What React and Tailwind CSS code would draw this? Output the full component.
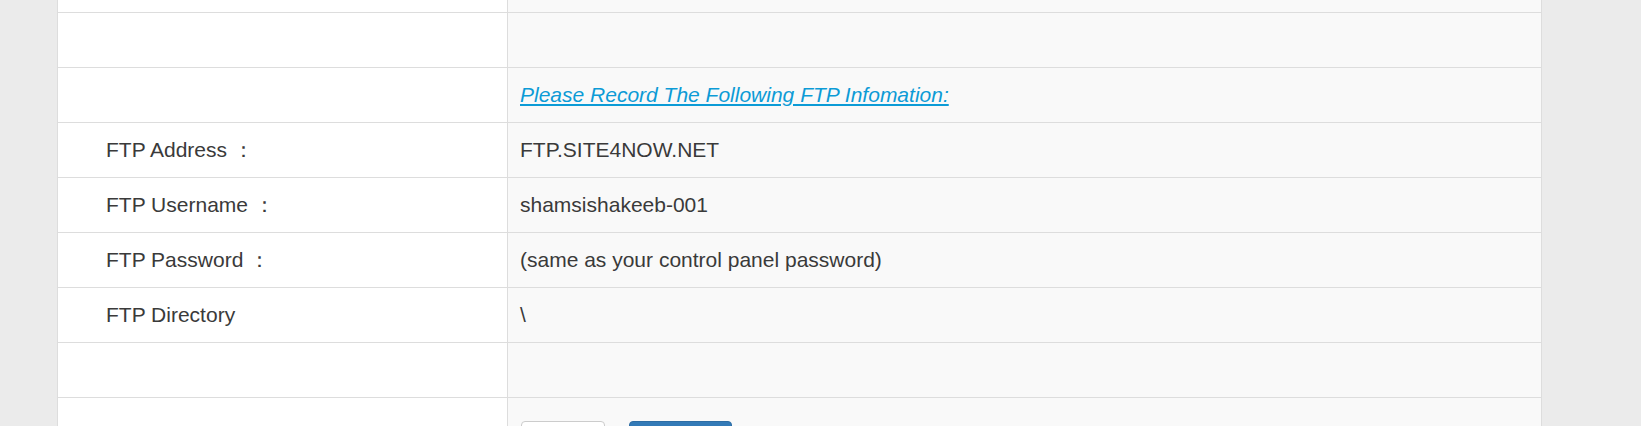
import React from "react";

const rows = [
  { label: "FTP Address ：", value: "FTP.SITE4NOW.NET" },
  { label: "FTP Username ：", value: "shamsishakeeb-001" },
  { label: "FTP Password ：", value: "(same as your control panel password)" },
  { label: "FTP Directory", value: "\\" },
];

function Row({ label, children, h = "h-[55px]" }) {
  return (
    <div className={`flex ${h} border-b border-[#dddddd]`}>
      <div className="w-[450px] shrink-0 border-r border-[#dddddd] bg-white flex items-center pl-[48px]">
        {label}
      </div>
      <div className="flex-1 bg-[#f9f9f9] flex items-center pl-[12px]">{children}</div>
    </div>
  );
}

export default function App() {
  return (
    <div
      className="min-h-screen h-[426px] overflow-hidden bg-[#ebebeb] text-[21px] text-[#3a3a3a]"
      style={{ fontFamily: '"Liberation Sans", Arial, sans-serif' }}
    >
      <div className="ml-[57px] w-[1485px] border-x border-[#dddddd]">
        <Row h="h-[13px]" />
        <Row />
        <Row>
          <a href="#" className="italic underline text-[#0c9bd6]">
            Please Record The Following FTP Infomation:
          </a>
        </Row>
        {rows.map((r) => (
          <Row key={r.label} label={r.label}>
            {r.value}
          </Row>
        ))}
        <Row />
        <div className="flex h-[60px]">
          <div className="w-[450px] shrink-0 border-r border-[#dddddd] bg-white" />
          <div className="flex-1 bg-[#f9f9f9] flex items-start pl-[13px] pt-[23px] gap-[24px]">
            <button
              aria-label="Back"
              className="w-[84px] h-[40px] rounded-[4px] border border-[#cccccc] bg-white"
            />
            <button
              aria-label="Submit"
              className="w-[103px] h-[40px] rounded-[4px] border border-[#2e6da4] bg-[#337ab7]"
            />
          </div>
        </div>
      </div>
    </div>
  );
}
